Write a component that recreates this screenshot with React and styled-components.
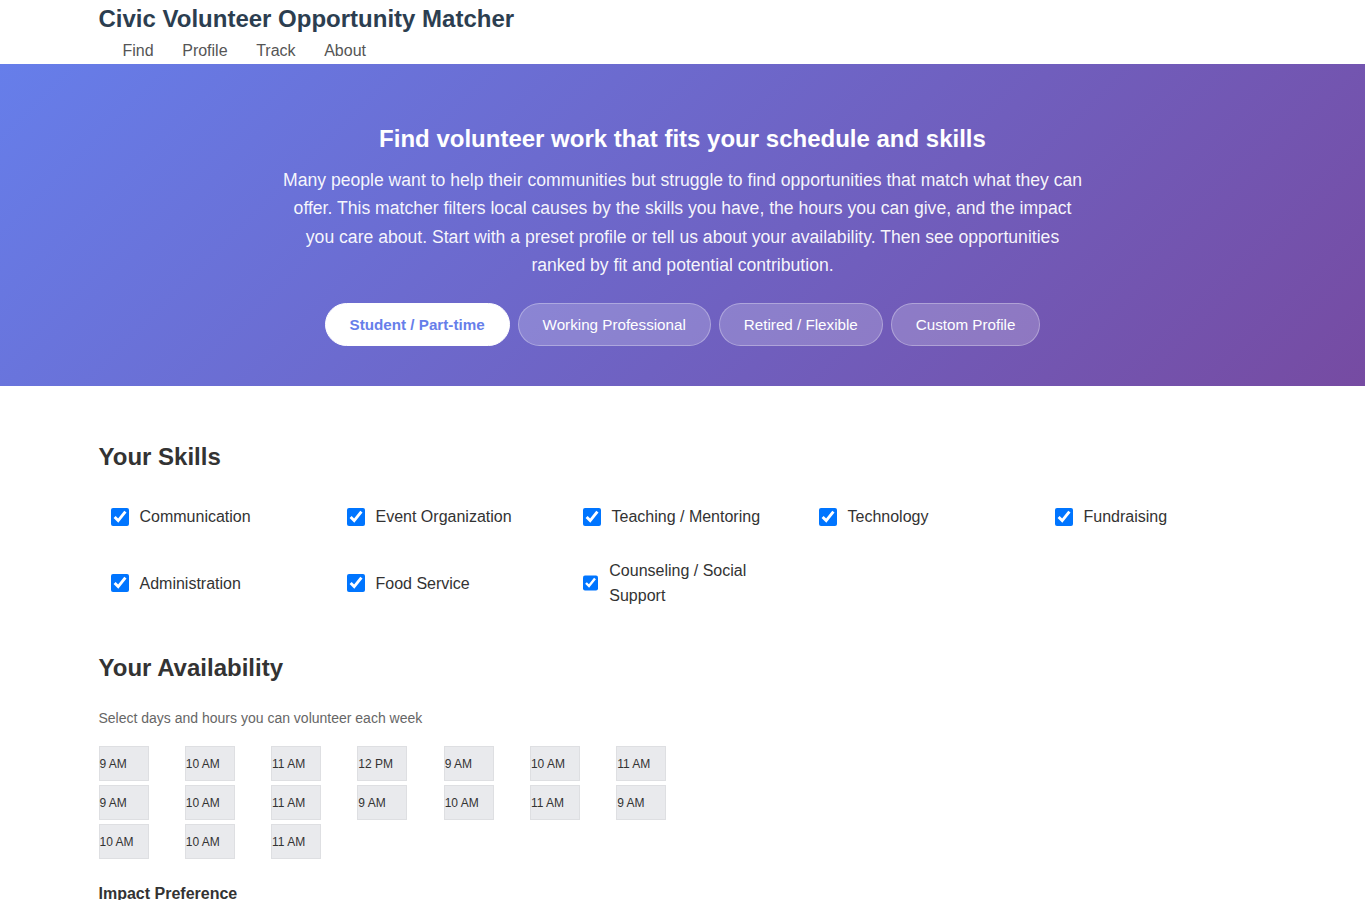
import React, { useState } from 'react';
import styled, { createGlobalStyle } from 'styled-components';

const GlobalStyle = createGlobalStyle`
	* {
		box-sizing: border-box;
	}
	body {
		margin: 0;
		font-family: 'Liberation Sans', Arial, sans-serif;
		color: #333;
		background: #fff;
	}
`;

const Header = styled.header`
	background: #fff;
	padding: 5px 0 4px;
`;

const Container = styled.div`
	max-width: 1200px;
	margin: 0 auto;
	padding: 0 16px;
`;

const Title = styled.h1`
	margin: 0;
	font-size: 24px;
	line-height: 28px;
	font-weight: 700;
	color: #2c3e50;
`;

const Nav = styled.nav`
	display: flex;
	gap: 28.6px;
	margin-top: 9px;
	padding-left: 24px;
`;

const NavLink = styled.a`
	font-size: 16px;
	line-height: 18px;
	color: #555;
	text-decoration: none;
	cursor: pointer;
`;

const Hero = styled.section`
	background: linear-gradient(135deg, #667eea 0%, #764ba2 100%);
	color: #fff;
	text-align: center;
	padding: 40px 20px;
`;

const HeroTitle = styled.h2`
	margin: 20px 0 12px;
	font-size: 24px;
	line-height: 30px;
	font-weight: 700;
`;

const HeroText = styled.p`
	max-width: 800px;
	margin: 0 auto 24px;
	font-size: 17.6px;
	line-height: 28.3px;
	color: rgba(255, 255, 255, 0.95);
`;

const Presets = styled.div`
	display: flex;
	justify-content: center;
	flex-wrap: wrap;
	gap: 8px;
`;

const PresetButton = styled.button`
	font-family: inherit;
	font-size: 15.2px;
	line-height: 17px;
	padding: 12px 24px;
	border-radius: 25px;
	border: 1px solid ${(p) => (p.$active ? '#fff' : 'rgba(255, 255, 255, 0.3)')};
	background: ${(p) => (p.$active ? '#fff' : 'rgba(255, 255, 255, 0.2)')};
	color: ${(p) => (p.$active ? '#667eea' : '#fff')};
	font-weight: ${(p) => (p.$active ? 700 : 400)};
	cursor: pointer;
`;

const Main = styled.main`
	padding-top: 56px;
	padding-bottom: 40px;
`;

const Section = styled.section`
	margin-bottom: 36px;
`;

const SectionTitle = styled.h2`
	margin: 0 0 ${(p) => p.$gap || 22}px;
	font-size: 24px;
	line-height: 30px;
	font-weight: 700;
	color: #333;
`;

const SkillGrid = styled.div`
	display: grid;
	grid-template-columns: repeat(5, 1fr);
	gap: 11px 12px;
`;

const SkillItem = styled.label`
	display: flex;
	align-items: center;
	padding: 9px 12px;
	font-size: 16px;
	line-height: 25px;
	color: #333;
	cursor: pointer;

	input {
		width: 18px;
		height: 18px;
		margin: 0 11px 0 0;
	}
`;

const Hint = styled.p`
	margin: 0 0 18px;
	font-size: 14px;
	line-height: 20px;
	color: #666;
`;

const SlotGrid = styled.div`
	display: grid;
	grid-template-columns: repeat(7, 1fr);
	gap: 4px;
	max-width: 600px;
`;

const Slot = styled.button`
	width: 50px;
	height: 35px;
	padding: 0;
	text-align: left;
	font-family: inherit;
	font-size: 12px;
	color: #333;
	background: ${(p) => (p.$on ? '#dfe6fb' : '#e9eaed')};
	border: 1px solid #dedfe2;
	border-radius: 0;
	cursor: pointer;
`;

const SubTitle = styled.h3`
	margin: 26px 0 12px;
	font-size: 16px;
	line-height: 18px;
	font-weight: 700;
	color: #333;
`;

const ImpactRow = styled.div`
	display: flex;
	gap: 8px;
	flex-wrap: wrap;
`;

const ImpactChip = styled.button`
	font-family: inherit;
	font-size: 14px;
	padding: 8px 16px;
	border-radius: 20px;
	border: 1px solid #ccc;
	background: #fff;
	color: #333;
`;

const presets = ['Student / Part-time', 'Working Professional', 'Retired / Flexible', 'Custom Profile'];

const skills = [
	'Communication',
	'Event Organization',
	'Teaching / Mentoring',
	'Technology',
	'Fundraising',
	'Administration',
	'Food Service',
	'Counseling / Social Support',
];

const slots = [
	'9 AM', '10 AM', '11 AM', '12 PM', '9 AM', '10 AM', '11 AM',
	'9 AM', '10 AM', '11 AM', '9 AM', '10 AM', '11 AM', '9 AM',
	'10 AM', '10 AM', '11 AM',
];

const impacts = ['Education', 'Environment', 'Health', 'Hunger', 'Housing'];

export default function App() {
	const [preset, setPreset] = useState(0);
	const [checked, setChecked] = useState(skills.map(() => true));
	const [picked, setPicked] = useState({});

	const toggleSkill = (i) => setChecked((c) => c.map((v, j) => (j === i ? !v : v)));
	const toggleSlot = (i) => setPicked((p) => ({ ...p, [i]: !p[i] }));

	return (
		<>
			<GlobalStyle />
			<Header>
				<Container>
					<Title>Civic Volunteer Opportunity Matcher</Title>
					<Nav>
						<NavLink>Find</NavLink>
						<NavLink>Profile</NavLink>
						<NavLink>Track</NavLink>
						<NavLink>About</NavLink>
					</Nav>
				</Container>
			</Header>

			<Hero>
				<HeroTitle>Find volunteer work that fits your schedule and skills</HeroTitle>
				<HeroText>
					Many people want to help their communities but struggle to find opportunities that match what
					they can offer. This matcher filters local causes by the skills you have, the hours you can give,
					and the impact you care about. Start with a preset profile or tell us about your availability.
					Then see opportunities ranked by fit and potential contribution.
				</HeroText>
				<Presets>
					{presets.map((name, i) => (
						<PresetButton key={name} $active={i === preset} onClick={() => setPreset(i)}>
							{name}
						</PresetButton>
					))}
				</Presets>
			</Hero>

			<Main>
				<Container>
					<Section>
						<SectionTitle $gap={23}>Your Skills</SectionTitle>
						<SkillGrid>
							{skills.map((skill, i) => (
								<SkillItem key={skill}>
									<input type="checkbox" checked={checked[i]} onChange={() => toggleSkill(i)} />
									<span>{skill}</span>
								</SkillItem>
							))}
						</SkillGrid>
					</Section>

					<Section>
						<SectionTitle $gap={25}>Your Availability</SectionTitle>
						<Hint>Select days and hours you can volunteer each week</Hint>
						<SlotGrid>
							{slots.map((time, i) => (
								<div key={i}>
									<Slot $on={picked[i]} onClick={() => toggleSlot(i)}>
										{time}
									</Slot>
								</div>
							))}
						</SlotGrid>
						<SubTitle>Impact Preference</SubTitle>
						<ImpactRow>
							{impacts.map((name) => (
								<ImpactChip key={name}>{name}</ImpactChip>
							))}
						</ImpactRow>
					</Section>
				</Container>
			</Main>
		</>
	);
}
